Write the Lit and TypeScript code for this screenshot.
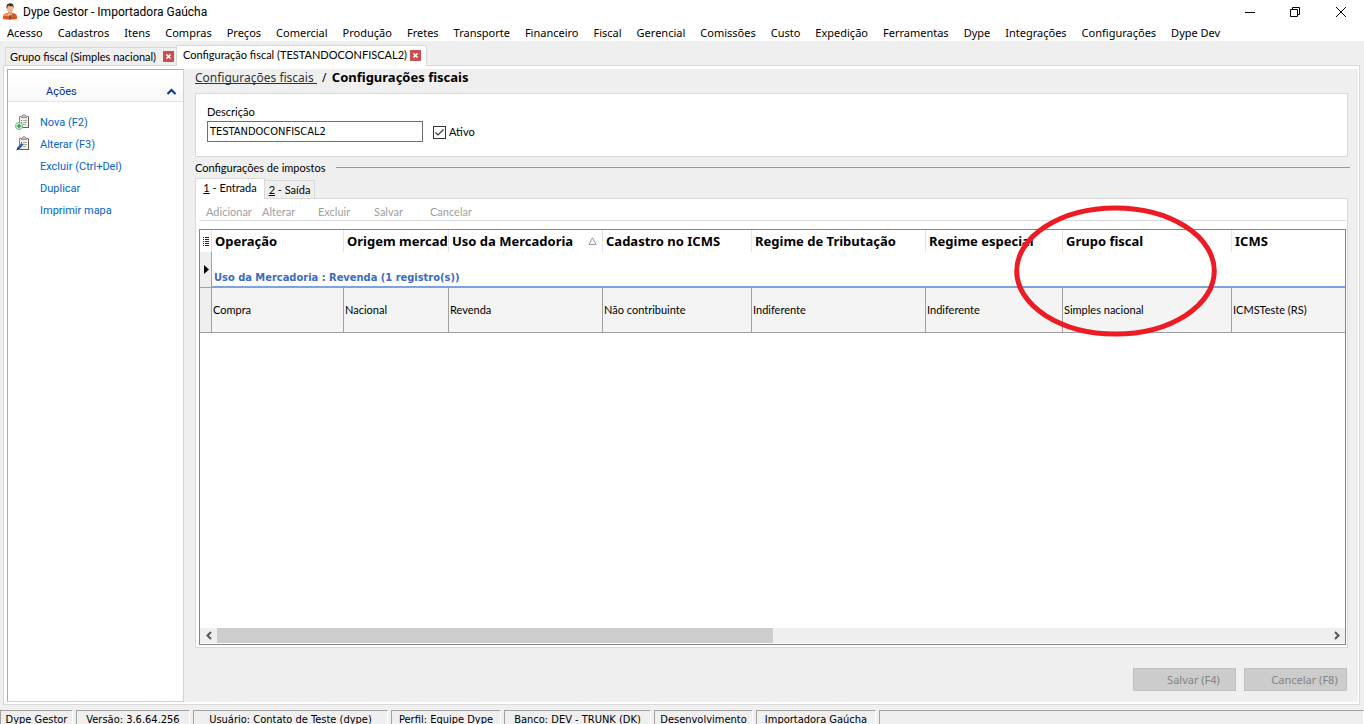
import { LitElement, html, svg, css, nothing } from "lit";
import { customElement, state } from "lit/decorators.js";

const MENU = [
  "Acesso", "Cadastros", "Itens", "Compras", "Preços", "Comercial", "Produção",
  "Fretes", "Transporte", "Financeiro", "Fiscal", "Gerencial", "Comissões",
  "Custo", "Expedição", "Ferramentas", "Dype", "Integrações", "Configurações",
  "Dype Dev",
];

const clipboard = svg`
  <path d="M4.500 2.500h9v11h-9z" fill="#f4efe9" stroke="#8f8175"/>
  <path d="M13.500 3v10.500H5" fill="none" stroke="#6a5d52"/>
  <path d="M6.500 3.500v-1q0-1 1.500-1 .2-1 1-1t1 1q1.500 0 1.500 1v1z" fill="#c9c9c9" stroke="#909090"/>
  <path d="M8 6.500h4M8 8.500h4M8 10.500h3" stroke="#a9aeb3"/>
  <path d="M6 6.500h1M6 8.500h1" stroke="#777"/>`;

const iconNova = html`<svg width="16" height="16" viewBox="0 0 16 16">
  ${clipboard}
  <circle cx="4" cy="12" r="3.500" fill="#eef8f0" stroke="#6db981"/>
  <path d="M4 9.800v4.400M1.800 12h4.400" stroke="#2f9a4c" stroke-width="1.400"/>
</svg>`;

const iconAlterar = html`<svg width="16" height="16" viewBox="0 0 16 16">
  ${clipboard}
  <path d="M1.500 14.500l1-3 4-4.500 2 1.600-4 4.600z" fill="#2a5f9e"/>
  <path d="M1.500 14.500l1-3 1.800 1.600z" fill="#17365c"/>
</svg>`;

const ACTIONS = [
  { label: "Nova (F2)", icon: iconNova },
  { label: "Alterar (F3)", icon: iconAlterar },
  { label: "Excluir (Ctrl+Del)" },
  { label: "Duplicar" },
  { label: "Imprimir mapa" },
];

const COLUMNS = [
  { title: "Operação", width: 132, value: "Compra" },
  { title: "Origem mercadoria", width: 105, value: "Nacional" },
  { title: "Uso da Mercadoria", width: 154, value: "Revenda", sorted: true },
  { title: "Cadastro no ICMS", width: 149, value: "Não contribuinte" },
  { title: "Regime de Tributação", width: 174, value: "Indiferente" },
  { title: "Regime especial", width: 137, value: "Indiferente" },
  { title: "Grupo fiscal", width: 169, value: "Simples nacional" },
  { title: "ICMS", width: 0, value: "ICMSTeste (RS)" },
];

const STATUS = [
  { text: "Dype Gestor", width: 73 },
  { text: "Versão: 3.6.64.256", width: 114 },
  { text: "Usuário: Contato de Teste (dype)", width: 195 },
  { text: "Perfil: Equipe Dype", width: 110 },
  { text: "Banco: DEV - TRUNK (DK)", width: 147 },
  { text: "Desenvolvimento", width: 99 },
  { text: "Importadora Gaúcha", width: 120 },
];

@customElement("app-root")
export class AppRoot extends LitElement {
  @state() private tab = 1;

  static styles = css`
    :host {
      display: flex;
      flex-direction: column;
      height: 100vh;
      overflow: hidden;
      background: #efefef;
      color: #000;
      font: 11px/14px "Lato", sans-serif;
    }
    * { box-sizing: border-box; }
    svg { display: block; flex: none; }
    button {
      appearance: none;
      margin: 0;
      padding: 0;
      border: 0;
      background: none;
      color: inherit;
      font: inherit;
    }
    ul { margin: 0; padding: 0; list-style: none; }

    .titlebar {
      display: flex;
      align-items: center;
      height: 24px;
      padding: 0 17px 0 2px;
      background: #fff;
      font: 12px/16px "Roboto", sans-serif;
    }
    .app-title { flex: 1; margin: 0 0 0 5px; font: inherit; }
    .window-buttons { display: flex; gap: 34px; height: 20px; align-items: center; }
    .menu {
      display: flex;
      gap: 15px;
      height: 17px;
      padding: 0 7px;
      background: #fff;
      font: 11px/18px "Noto Sans", sans-serif;
      white-space: nowrap;
    }

    .doc-tabs {
      display: flex;
      align-items: flex-end;
      height: 25px;
      padding: 4px 5px 0;
      margin-bottom: -1px;
      z-index: 1;
    }
    .doc-tab {
      display: flex;
      align-items: center;
      justify-content: space-between;
      height: 19px;
      padding: 0 2px 0 4px;
      border: 1px solid #d9d9d9;
      border-right: 0;
      width: 171px;
      white-space: nowrap;
    }
    .doc-tab.active {
      width: 251px;
      height: 21px;
      padding: 0 5px 2px 6px;
      background: #fff;
      border-right: 1px solid #d9d9d9;
      border-bottom: 0;
    }

    .workspace {
      flex: 1;
      display: flex;
      min-height: 0;
      margin: 0 4px 0 3px;
      padding: 3px 1px 2px 3px;
      background: #fff;
      border: 1px solid #d9d9d9;
    }
    .sidebar {
      flex: 0 0 177px;
      background: #fff;
      border: 1px solid #c9d5de;
      border-left-color: #9fb0be;
      border-top-color: #9fb0be;
      font: 11px/22px "Roboto", sans-serif;
    }
    .sidebar-head {
      display: flex;
      align-items: center;
      justify-content: space-between;
      width: 100%;
      height: 32px;
      padding: 12px 6px 0 38px;
      border-bottom: 1px solid #e4e4e4;
      background: linear-gradient(#fff, #f9f9f9);
      color: #003399;
    }
    .actions { padding-top: 10px; }
    .action { display: flex; align-items: center; height: 22px; padding-left: 7px; color: #0066cc; }
    .action-icon { width: 25px; padding-bottom: 2px; }

    .content {
      flex: 1;
      display: flex;
      flex-direction: column;
      min-width: 0;
      padding: 0 10px 11px 11px;
      background: #efefef;
    }
    .breadcrumb {
      display: flex;
      height: 24px;
      font: 12px/18px "Noto Sans", sans-serif;
      white-space: pre;
    }
    .breadcrumb a { height: 15px; color: #333; text-decoration: none; border-bottom: 1px solid #333; }
    .slash { width: 15px; text-align: center; }
    .breadcrumb b { font-size: 13px; line-height: 16px; }
    .form {
      display: flex;
      align-items: flex-end;
      gap: 10px;
      height: 64px;
      padding: 0 11px 14px;
      background: #fff;
      border: 1px solid #d9d9d9;
    }
    .field { display: flex; flex-direction: column; gap: 2px; width: 216px; }
    .field input {
      width: 100%;
      height: 21px;
      padding: 0 2px;
      border: 1px solid #6f6f6f;
      background: #fff;
      font: 11px/16px "DejaVu Sans Condensed", "DejaVu Sans", sans-serif;
      outline: 0;
    }
    .check { display: flex; align-items: center; gap: 3px; padding-bottom: 3px; }
    .check input {
      appearance: none;
      width: 13px;
      height: 13px;
      margin: 0;
      border: 1px solid #333;
      background: #fff url('data:image/svg+xml,<svg xmlns="http://www.w3.org/2000/svg" viewBox="0 0 11 11"><path d="M1.500 5.500l2.500 2.500 5.500-5.500" fill="none" stroke="%23333" stroke-width="1.200"/></svg>');
    }
    .group-title { display: flex; align-items: center; height: 21px; margin-right: -2px; }
    .group-title h2 { width: 141px; margin: 0; font: inherit; }
    .group-title hr { flex: 1; margin: 0; border: 0; border-top: 1px solid #999; }

    .inner-tabs { display: flex; align-items: flex-end; height: 21px; margin-bottom: -1px; z-index: 1; }
    .inner-tab { height: 19px; width: 50px; border: 1px solid #d9d9d9; border-left: 0; }
    .inner-tab.active {
      width: 70px;
      height: 21px;
      padding-bottom: 2px;
      border-left: 1px solid #d9d9d9;
      border-bottom: 0;
      background: #fff;
    }
    .inner-panel {
      flex: 1;
      display: flex;
      flex-direction: column;
      min-height: 0;
      padding: 0 1px 2px 3px;
      background: #fff;
      border: 1px solid #d9d9d9;
    }
    .toolbar {
      display: grid;
      grid-template-columns: repeat(5, 56px);
      height: 22px;
      padding-left: 7px;
      margin-bottom: 8px;
      border-bottom: 1px solid #d9d9d9;
      color: #a0a0a0;
    }
    .toolbar button { height: 26px; text-align: left; }

    .grid {
      position: relative;
      flex: 1;
      display: flex;
      flex-direction: column;
      min-height: 0;
      border: 1px solid #838389;
    }
    table { width: 100%; table-layout: fixed; border-collapse: separate; border-spacing: 0; }
    .col-mark { width: 12px; }
    th, td { padding: 0; text-align: left; white-space: nowrap; overflow: hidden; }
    thead th { height: 22px; border-right: 1px solid #e4e4e4; font: bold 13px/20px "Noto Sans", sans-serif; }
    thead th:last-child { border-right: 0; }
    .head-cell { display: flex; align-items: center; justify-content: space-between; margin: 0 1px 0 3px; overflow: hidden; }
    .head-cell svg { margin-right: 4px; }
    .mark { border-right: 1px solid #a0a0a0; border-bottom: 1px solid #a0a0a0; background: #efefef; }
    .group-row td { height: 36px; }
    .group-cell {
      padding-left: 2px;
      vertical-align: bottom;
      border-bottom: 2px solid #7da2e0;
      color: #3a6cc0;
      font: bold 11px/16px "DejaVu Sans Condensed", "DejaVu Sans", sans-serif;
    }
    .data-row td {
      height: 45px;
      padding-left: 1px;
      border-right: 1px solid #a0a0a0;
      border-bottom: 1px solid #a0a0a0;
      background: #f4f4f4;
    }
    .data-row td:last-child { border-right: 0; }
    .data-row .mark { background: #efefef; }
    .scrollbar { display: flex; align-items: center; height: 16px; margin-top: auto; padding-bottom: 1px; background: linear-gradient(#efefef 15px, #fff 15px); }
    .scroll-arrow { width: 17px; height: 15px; display: grid; place-items: center; }
    .scroll-track { flex: 1; height: 15px; }
    .scroll-thumb { height: 15px; background: #cdcdcd; }
    .highlight { position: absolute; left: 814px; top: -25px; pointer-events: none; }

    .footer { display: flex; justify-content: flex-end; gap: 8px; padding: 20px 1px 0; }
    .footer button {
      width: 103px;
      height: 23px;
      padding-left: 18px;
      border: 1px solid #bfbfbf;
      background: #ccc;
      color: #838383;
      font: 11px/20px "Noto Sans", sans-serif;
    }

    .statusbar {
      display: flex;
      gap: 3px;
      height: 14px;
      margin-top: 5px;
      font: 11px/17px "DejaVu Sans Condensed", "DejaVu Sans", sans-serif;
      white-space: nowrap;
    }
    .status { height: 20px; border: 1px solid #fff; border-top-color: #a0a0a0; border-left-color: #a0a0a0; text-align: center; }
    .status.rest { flex: 1; }
  `;

  private close() {
    return html`<button aria-label="Fechar aba"><svg width="11" height="11" viewBox="0 0 11 11">
      <rect width="11" height="11" fill="#c75050"/>
      <path d="M3.500 3.500l4 4M7.500 3.500l-4 4" stroke="#fff" stroke-width="1.600"/>
    </svg></button>`;
  }

  render() {
    return html`
      <header class="titlebar">
        <svg width="16" height="18" viewBox="0 0 16 18">
          <path d="M1 16v-2.500q0-2.500 4-3.500h6q4 1 4 3.500V16q-7 1.500-14 0z" fill="#d9581a"/>
          <path d="M1.500 13q.5-2 4-2.700l2.500 3z" fill="#f39a55"/>
          <path d="M6 10.200h4l-2 4.500z" fill="#fff"/>
          <path d="M7.500 11.500h1l.5 3.500-1 1-1-1z" fill="#444"/>
          <path d="M6 7.500h4v2.700l-2 1.300-2-1.300z" fill="#d99668"/>
          <ellipse cx="8" cy="5.400" rx="3.300" ry="4" fill="#f0b88d"/>
          <path d="M4.500 5.200Q3.800 .4 8 .2t3.700 5l-.8-2q-3 .3-4.800-.8-.9 1-.8 2.800z" fill="#4a3226"/>
        </svg>
        <h1 class="app-title">Dype Gestor - Importadora Gaúcha</h1>
        <div class="window-buttons">
          <button aria-label="Minimizar"><svg width="12" height="12" viewBox="0 0 12 12"><path d="M2 6.500h10" stroke="#000"/></svg></button>
          <button aria-label="Restaurar"><svg width="12" height="12" viewBox="0 0 12 12"><path d="M1.500 3.500h7v7h-7zM3.500 3V1.500h7v7H9" fill="none" stroke="#000"/></svg></button>
          <button aria-label="Fechar"><svg width="12" height="12" viewBox="0 0 12 12"><path d="M1 1l10 10M11 1L1 11" stroke="#000"/></svg></button>
        </div>
      </header>
      <nav class="menu">${MENU.map((m) => html`<button>${m}</button>`)}</nav>

      <div class="doc-tabs">
        <div class="doc-tab"><span>Grupo fiscal (Simples nacional)</span>${this.close()}</div>
        <div class="doc-tab active"><span>Configuração fiscal (TESTANDOCONFISCAL2)</span>${this.close()}</div>
      </div>

      <main class="workspace">
        <aside class="sidebar">
          <button class="sidebar-head">
            <span>Ações</span>
            <svg width="11" height="8" viewBox="0 0 11 8"><path d="M1.500 6l4-4 4 4" fill="none" stroke="#003399" stroke-width="2"/></svg>
          </button>
          <ul class="actions">
            ${ACTIONS.map((a) => html`<li><button class="action"><span class="action-icon">${a.icon ?? nothing}</span>${a.label}</button></li>`)}
          </ul>
        </aside>

        <section class="content">
          <div class="breadcrumb"><a href="#">Configurações fiscais </a><span class="slash">/</span><b>Configurações fiscais</b></div>

          <div class="form">
            <div class="field">
              <label for="descricao">Descrição</label>
              <input id="descricao" type="text" value="TESTANDOCONFISCAL2">
            </div>
            <div class="check">
              <input id="ativo" type="checkbox" checked><label for="ativo">Ativo</label>
            </div>
          </div>

          <div class="group-title"><h2>Configurações de impostos</h2><hr></div>

          <div class="inner-tabs">
            <button class="inner-tab ${this.tab === 1 ? "active" : ""}" @click=${() => (this.tab = 1)}><u>1</u> - Entrada</button>
            <button class="inner-tab ${this.tab === 2 ? "active" : ""}" @click=${() => (this.tab = 2)}><u>2</u> - Saída</button>
          </div>
          <div class="inner-panel">
            <div class="toolbar">
              ${["Adicionar", "Alterar", "Excluir", "Salvar", "Cancelar"].map((t) => html`<button disabled>${t}</button>`)}
            </div>
            <div class="grid">
              <table>
                <colgroup>
                  <col class="col-mark">
                  ${COLUMNS.map((c) => html`<col style=${c.width ? `width:${c.width}px` : ""}>`)}
                </colgroup>
                <thead>
                  <tr>
                    <th><svg width="11" height="11" viewBox="0 0 11 11"><path d="M3 1.500h1M5 1.500h4M3 3.500h1M5 3.500h4M3 5.500h1M5 5.500h4M3 7.500h1M5 7.500h4M3 9.500h1M5 9.500h4" stroke="#222"/></svg></th>
                    ${COLUMNS.map((c) => html`<th><div class="head-cell">${c.title}${c.sorted
                      ? html`<svg width="9" height="8" viewBox="0 0 9 8"><path d="M1 7.500h7L4.500 .8z" fill="none" stroke="#999"/></svg>`
                      : nothing}</div></th>`)}
                  </tr>
                </thead>
                <tbody>
                  <tr class="group-row">
                    <td class="mark"><svg width="11" height="11" viewBox="0 0 11 11"><path d="M4 1v9l5-4.500z"/></svg></td>
                    <td class="group-cell" colspan="8">Uso da Mercadoria : Revenda (1 registro(s))</td>
                  </tr>
                  <tr class="data-row">
                    <td class="mark"></td>
                    ${COLUMNS.map((c) => html`<td>${c.value}</td>`)}
                  </tr>
                </tbody>
              </table>
              <div class="scrollbar">
                <button class="scroll-arrow" aria-label="Rolar para a esquerda"><svg width="8" height="9" viewBox="0 0 8 9"><path d="M6 1L2.500 4.500 6 8" fill="none" stroke="#555" stroke-width="2"/></svg></button>
                <div class="scroll-track"><div class="scroll-thumb" style="width:50%"></div></div>
                <button class="scroll-arrow" aria-label="Rolar para a direita"><svg width="8" height="9" viewBox="0 0 8 9"><path d="M2 1l3.500 3.500L2 8" fill="none" stroke="#555" stroke-width="2"/></svg></button>
              </div>
              <svg class="highlight" width="203" height="133" viewBox="0 0 203 133">
                <ellipse cx="101.500" cy="66" rx="98.800" ry="63" fill="none" stroke="#ed1c24" stroke-width="5"/>
              </svg>
            </div>
          </div>

          <div class="footer">
            <button disabled>Salvar (F4)</button>
            <button disabled>Cancelar (F8)</button>
          </div>
        </section>
      </main>

      <footer class="statusbar">
        ${STATUS.map((s) => html`<div class="status" style="width:${s.width}px">${s.text}</div>`)}
        <div class="status rest"></div>
      </footer>
    `;
  }
}
